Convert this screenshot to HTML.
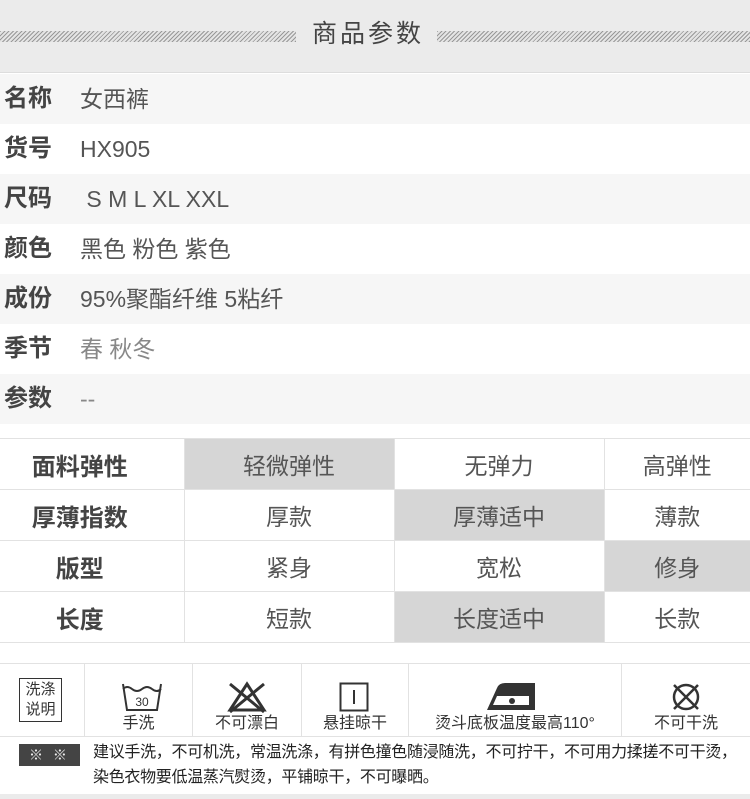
<!DOCTYPE html>
<html><head><meta charset="utf-8"><style>
*{margin:0;padding:0;box-sizing:border-box}
body{width:750px;height:799px;background:#fff;font-family:"Liberation Sans","Noto Sans CJK SC",sans-serif;color:#555;position:relative;overflow:hidden}
.hdr{position:absolute;left:0;top:0;width:750px;height:73px;background:#ebebeb;border-bottom:1px solid #ddd}
.stripe{position:absolute;top:31px;height:11px;background:repeating-linear-gradient(135deg,#999 0 1px,#e4e4e4 1px 3px)}
.title{position:absolute;left:300px;top:14px;width:136px;text-align:center;font-size:25px;color:#444;letter-spacing:3px}
.row{position:absolute;left:0;width:750px;height:50px;font-size:23px;line-height:50px}
.row b{position:absolute;left:4px;font-weight:bold;color:#444;font-size:24px}
.row span{position:absolute;left:80px;color:#555}
.g{background:#f6f6f6}
table{position:absolute;left:0;top:438px;border-collapse:collapse;width:750px}
td{height:51px;border:1px solid #e2e2e2;text-align:center;font-size:23px;color:#555}
tr td:first-child{border-left:none}
tr td:last-child{border-right:none}
td.l{font-weight:bold;color:#444;padding-right:24px;font-size:24px}
td.s{background:#d6d6d6}
.care{position:absolute;left:0;top:663px;width:750px;height:74px;border-top:1px solid #e2e2e2;border-bottom:1px solid #e2e2e2}
.c{position:absolute;top:0;height:73px;border-right:1px solid #e2e2e2;text-align:center;font-size:16px;color:#333}
.c .t{position:absolute;bottom:4px;left:0;right:0}
.note{position:absolute;left:93px;top:740px;font-size:16px;line-height:25px;color:#222;width:655px;letter-spacing:-0.3px}
.xx{position:absolute;left:19px;top:744px;width:61px;height:22px;background:#444;color:#eee;font-size:14px;text-align:center;line-height:22px;letter-spacing:3px}
</style></head><body>
<div class="hdr"><div class="stripe" style="left:0;width:296px"></div><div class="stripe" style="left:437px;width:313px"></div><div class="title">商品参数</div></div>
<div class="row g" style="top:74px"><b>名称</b><span>女西裤</span></div>
<div class="row" style="top:124px"><b>货号</b><span>HX905</span></div>
<div class="row g" style="top:174px"><b>尺码</b><span>&nbsp;S M L XL XXL</span></div>
<div class="row" style="top:224px"><b>颜色</b><span>黑色 粉色 紫色</span></div>
<div class="row g" style="top:274px"><b>成份</b><span>95%聚酯纤维 5粘纤</span></div>
<div class="row" style="top:324px"><b>季节</b><span style="color:#888">春 秋冬</span></div>
<div class="row g" style="top:374px"><b>参数</b><span style="color:#888">--</span></div>
<table>
<tr><td class="l" style="width:184px">面料弹性</td><td class="s" style="width:210px">轻微弹性</td><td style="width:210px">无弹力</td><td>高弹性</td></tr>
<tr><td class="l">厚薄指数</td><td>厚款</td><td class="s">厚薄适中</td><td>薄款</td></tr>
<tr><td class="l">版型</td><td>紧身</td><td>宽松</td><td class="s">修身</td></tr>
<tr><td class="l">长度</td><td>短款</td><td class="s">长度适中</td><td>长款</td></tr>
</table>
<div class="care">
<div class="c" style="left:0;width:85px"><div style="position:absolute;left:19px;top:14px;width:43px;height:44px;border:1px solid #333;font-size:15px;line-height:20px;padding-top:1px">洗涤<br>说明</div></div>
<div class="c" style="left:85px;width:108px"><svg style="position:absolute;left:37px;top:18px" width="40" height="30"><path d="M1 2 L5 28 H35 L39 2 M1 7 q4-4 9 0 q5 4 10 0 q5-4 10 0 q5 4 9 0" fill="none" stroke="#333" stroke-width="2"/><text x="20" y="24" font-size="12" text-anchor="middle" fill="#333" font-family="Liberation Sans">30</text></svg><div class="t">手洗</div></div>
<div class="c" style="left:193px;width:109px"><svg style="position:absolute;left:33px;top:16px" width="42" height="34"><path d="M21 4 L38 30 H4 Z M4 4 L38 32 M38 4 L4 32" fill="none" stroke="#333" stroke-width="3"/></svg><div class="t">不可漂白</div></div>
<div class="c" style="left:302px;width:107px"><svg style="position:absolute;left:37px;top:18px" width="30" height="30"><rect x="1.5" y="1.5" width="27" height="27" fill="none" stroke="#333" stroke-width="2"/><path d="M15 8 V22" stroke="#333" stroke-width="2"/></svg><div class="t">悬挂晾干</div></div>
<div class="c" style="left:409px;width:213px"><svg style="position:absolute;left:76px;top:14px" width="54" height="34"><path d="M2 32 L12 10 Q14 5 20 5 H50 V32 Z" fill="#333"/><path d="M12 18 H44 V27 H8 Z" fill="#fff"/><circle cx="27" cy="23" r="3" fill="#333"/></svg><div class="t">烫斗底板温度最高110°</div></div>
<div class="c" style="left:622px;width:128px;border-right:none"><svg style="position:absolute;left:49px;top:18px" width="30" height="30"><circle cx="15" cy="15" r="12" fill="none" stroke="#333" stroke-width="2.5"/><path d="M3 3 L27 27 M27 3 L3 27" stroke="#333" stroke-width="2.5"/></svg><div class="t">不可干洗</div></div>
</div>
<div class="xx">※ ※</div>
<div class="note">建议手洗，不可机洗，常温洗涤，有拼色撞色随浸随洗，不可拧干，不可用力揉搓不可干烫，<br>染色衣物要低温蒸汽熨烫，平铺晾干，不可曝晒。</div>
<div style="position:absolute;left:0;top:794px;width:750px;height:5px;background:#ebebeb"></div>
</body></html>
